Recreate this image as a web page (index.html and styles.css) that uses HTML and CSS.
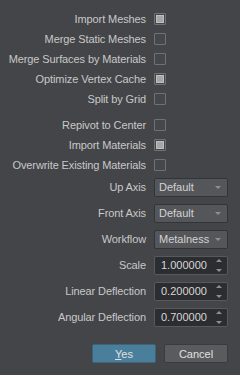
FILE: index.html
```
<!DOCTYPE html>
<html lang="en">
<head>
  <meta charset="UTF-8" />
  <meta name="viewport" content="width=device-width, initial-scale=1" />
  <title>Import Options</title>
  <link rel="stylesheet" href="styles.css">
</head>
<body>

  <div class="dialog">

    <!-- Mesh options -->
    <div class="group first">
      <div class="row"><span class="label">Import Meshes</span><span class="check on"></span></div>
      <div class="row"><span class="label">Merge Static Meshes</span><span class="check"></span></div>
      <div class="row"><span class="label">Merge Surfaces by Materials</span><span class="check"></span></div>
      <div class="row"><span class="label">Optimize Vertex Cache</span><span class="check on"></span></div>
      <div class="row"><span class="label">Split by Grid</span><span class="check"></span></div>
    </div>

    <!-- Material options -->
    <div class="group">
      <div class="row"><span class="label">Repivot to Center</span><span class="check"></span></div>
      <div class="row"><span class="label">Import Materials</span><span class="check on"></span></div>
      <div class="row"><span class="label">Overwrite Existing Materials</span><span class="check"></span></div>
    </div>

    <!-- Combos and values -->
    <div class="group fields">
      <div class="row tall"><span class="label">Up Axis</span><div class="combo">Default<span class="arrow"></span></div></div>
      <div class="row tall"><span class="label">Front Axis</span><div class="combo">Default<span class="arrow"></span></div></div>
      <div class="row tall"><span class="label">Workflow</span><div class="combo">Metalness<span class="arrow"></span></div></div>
      <div class="row tall"><span class="label">Scale</span><div class="spin">1.000000<span class="steps"><i class="up"></i><i class="down"></i></span></div></div>
      <div class="row tall"><span class="label">Linear Deflection</span><div class="spin">0.200000<span class="steps"><i class="up"></i><i class="down"></i></span></div></div>
      <div class="row tall"><span class="label">Angular Deflection</span><div class="spin">0.700000<span class="steps"><i class="up"></i><i class="down"></i></span></div></div>
    </div>

    <div class="buttons">
      <button class="btn yes"><u>Y</u>es</button>
      <button class="btn">Cancel</button>
    </div>

  </div>

</body>
</html>
```

FILE: styles.css
```
body {
  margin: 0;
  padding: 0;
  background-color: #444548;
  font-family: "Liberation Sans", Arial, sans-serif;
  font-size: 11px;
  color: #c8c8c8;
}

.dialog {
  height: 374px;
  border-bottom: 1px solid #2f3033;
  padding: 9px 12px 0 8px;
  box-sizing: content-box;
}

.group {
  margin-top: 6px;
}

.group.first {
  margin-top: 0;
}

.row {
  display: grid;
  grid-template-columns: 138px 74px;
  column-gap: 8px;
  align-items: center;
  height: 20px;
}

.row.tall {
  height: 26px;
}

.fields {
  margin-top: -1px;
}

.label {
  text-align: right;
  white-space: nowrap;
  letter-spacing: -0.1px;
}

.check {
  width: 10px;
  height: 10px;
  border: 1px solid #707174;
  border-radius: 1px;
  background: #46474a;
  position: relative;
}

.check.on::after {
  content: "";
  position: absolute;
  left: 1px;
  top: 1px;
  width: 6px;
  height: 6px;
  background: #a6a6a8;
  border: 1px solid #c0c0c2;
}

.combo, .spin {
  height: 17px;
  line-height: 17px;
  border: 1px solid #333437;
  border-radius: 2px;
  padding-left: 4px;
  position: relative;
  color: #d2d2d2;
}

.combo {
  background: #55565a;
}

.arrow {
  position: absolute;
  right: 6px;
  top: 7px;
  width: 0;
  height: 0;
  border-left: 3px solid transparent;
  border-right: 3px solid transparent;
  border-top: 3px solid #8e8f92;
}

.spin {
  background: #2c2d30;
  border-color: #58595c;
  padding-left: 6px;
  color: #d8d8d8;
}

.steps {
  position: absolute;
  right: 5px;
  top: 2px;
  display: flex;
  flex-direction: column;
  gap: 7px;
}

.steps i {
  display: block;
  width: 0;
  height: 0;
  border-left: 3px solid transparent;
  border-right: 3px solid transparent;
}

.steps .up {
  border-bottom: 3px solid #8e8f92;
}

.steps .down {
  border-top: 3px solid #8e8f92;
}

.buttons {
  display: flex;
  justify-content: flex-end;
  gap: 8px;
  margin-top: 14px;
}

.btn {
  width: 64px;
  height: 19px;
  padding: 0;
  font-family: "Liberation Sans", Arial, sans-serif;
  font-size: 11px;
  color: #e0e0e0;
  background: #5a5b5e;
  border: 1px solid #3a3b3e;
  border-radius: 2px;
}

.btn.yes {
  background: #4a7f9b;
  border-color: #3c6479;
}
```
